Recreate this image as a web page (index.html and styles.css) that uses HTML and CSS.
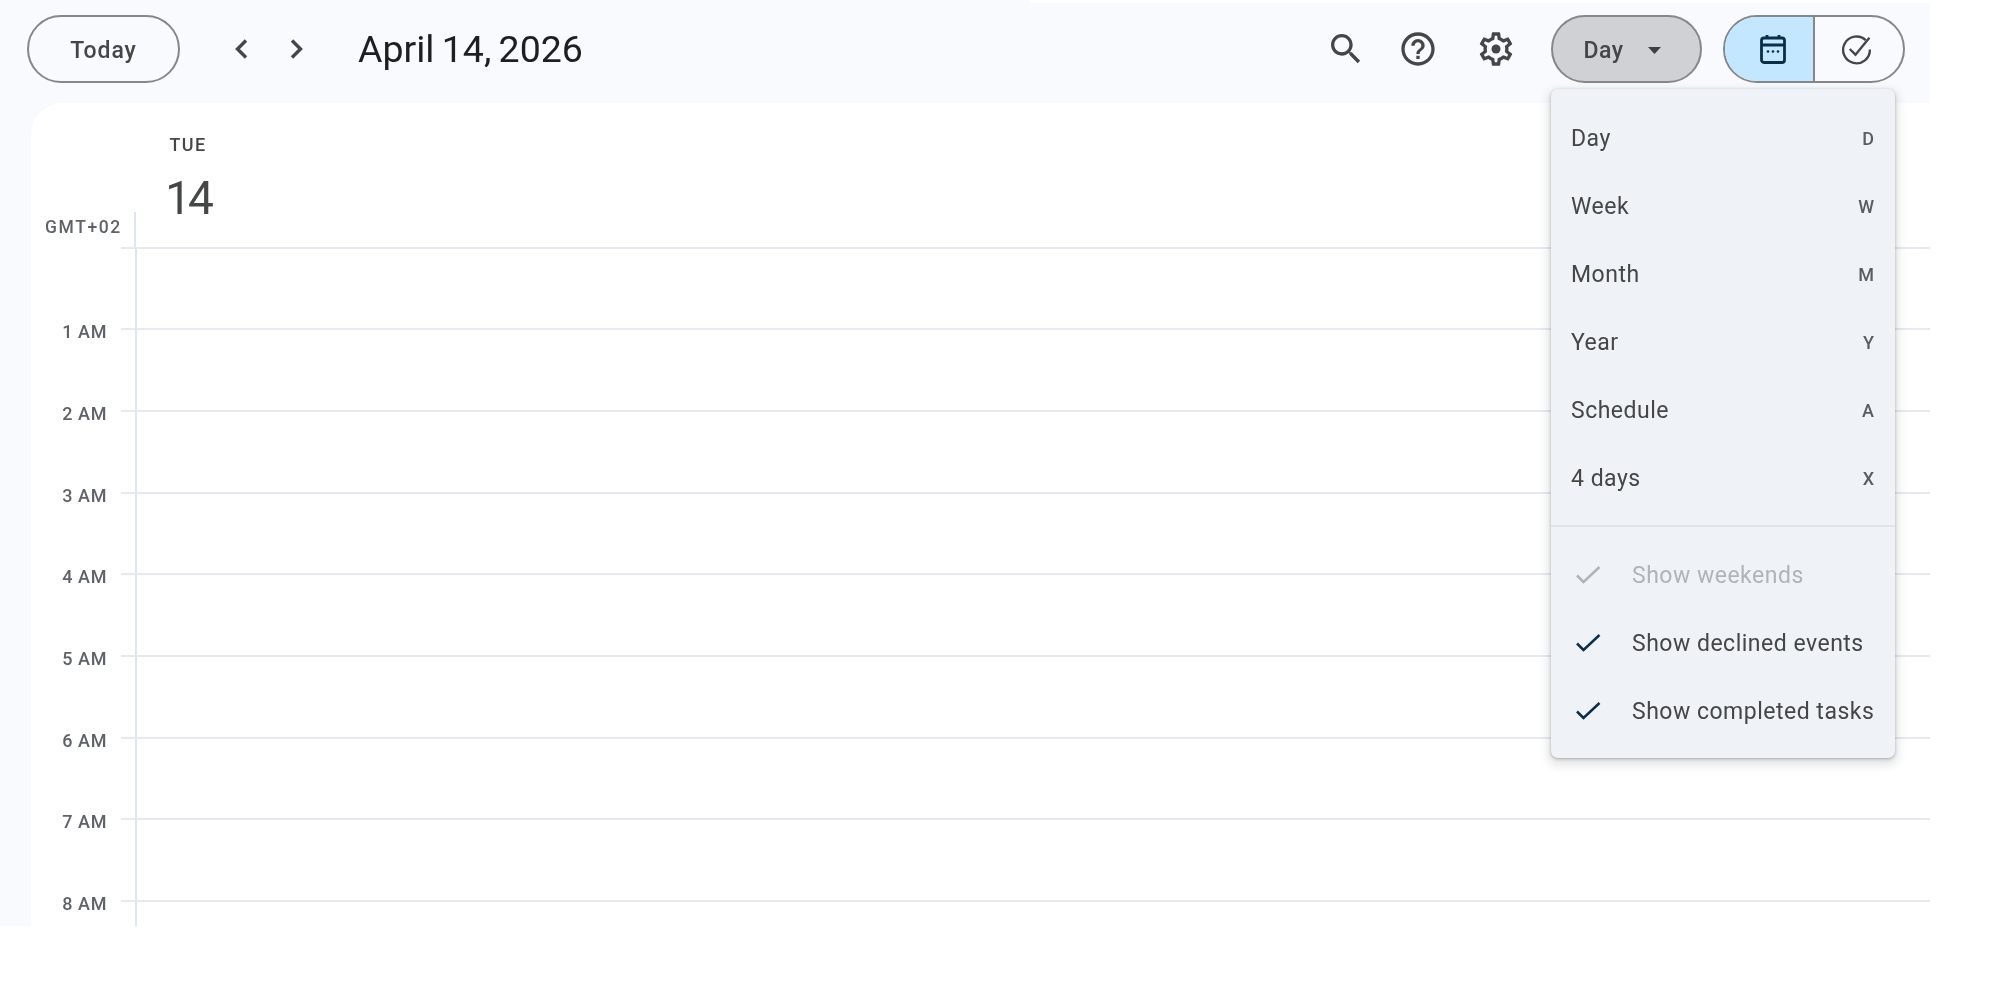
FILE: index.html
```html
<!DOCTYPE html>
<html lang="en">
<head>
<meta charset="utf-8">
<title>Calendar</title>
<link rel="stylesheet" href="styles.css">
</head>
<body>
<div class="app">
  <div class="edge-strip"></div>
  <header class="topbar">
    <button class="pill today">Today</button>
    <button class="icon-btn nav-first" aria-label="Previous"><svg viewBox="0 0 40 40"><path class="chev" d="M26 11.5 17.500 20 26 28.500"/></svg></button>
    <button class="icon-btn nav-next" aria-label="Next"><svg viewBox="0 0 40 40"><path class="chev" d="M14 11.500 22.500 20 14 28.500"/></svg></button>
    <h1 class="date-title">April 14, 2026</h1>
    <button class="icon-btn tool-search" aria-label="Search"><svg viewBox="0 0 24 24"><path d="M15.5 14h-.79l-.28-.27C15.41 12.59 16 11.11 16 9.5 16 5.910 13.090 3 9.500 3S3 5.910 3 9.500 5.910 16 9.500 16c1.610 0 3.090-.59 4.230-1.570l.27.28v.79l5 4.990L20.490 19l-4.990-5zm-6 0C7.010 14 5 11.990 5 9.500S7.010 5 9.500 5 14 7.010 14 9.500 11.990 14 9.500 14z"/></svg></button>
    <button class="icon-btn tool-help" aria-label="Help"><svg viewBox="0 0 24 24"><path d="M11 18h2v-2h-2v2zm1-16C6.480 2 2 6.480 2 12s4.480 10 10 10 10-4.480 10-10S17.520 2 12 2zm0 18c-4.410 0-8-3.590-8-8s3.590-8 8-8 8 3.590 8 8-3.590 8-8 8zm0-14c-2.210 0-4 1.790-4 4h2c0-1.100.9-2 2-2s2 .9 2 2c0 2-3 1.750-3 5h2c0-2.250 3-2.500 3-5 0-2.210-1.790-4-4-4z"/></svg></button>
    <button class="icon-btn tool-gear" aria-label="Settings"><svg viewBox="0 0 24 24"><path d="M19.430 12.980c.04-.32.07-.64.07-.98 0-.34-.03-.66-.07-.98l2.110-1.650c.19-.15.24-.42.12-.64l-2-3.460c-.09-.16-.26-.25-.44-.25-.06 0-.12.01-.17.03l-2.490 1c-.52-.4-1.080-.73-1.690-.98l-.38-2.650C14.460 2.180 14.250 2 14 2h-4c-.25 0-.46.18-.49.42l-.38 2.650c-.61.25-1.170.59-1.690.98l-2.490-1c-.06-.02-.12-.03-.18-.03-.17 0-.34.09-.43.25l-2 3.460c-.13.22-.07.49.12.64l2.110 1.650c-.04.32-.07.65-.07.98 0 .33.03.66.07.98l-2.110 1.650c-.19.15-.24.42-.12.64l2 3.460c.09.16.26.25.44.25.06 0 .12-.01.17-.03l2.490-1c.52.4 1.080.73 1.690.98l.38 2.650c.03.24.24.42.49.42h4c.25 0 .46-.18.49-.42l.38-2.650c.61-.25 1.170-.59 1.690-.98l2.490 1c.06.02.12.03.18.03.17 0 .34-.09.43-.25l2-3.460c.12-.22.07-.49-.12-.64l-2.110-1.650zm-1.980-1.710c.04.31.05.52.05.73 0 .21-.02.43-.05.73l-.14 1.130.89.7 1.080.84-.7 1.210-1.270-.51-1.040-.42-.9.68c-.43.32-.84.56-1.250.73l-1.060.43-.16 1.130-.2 1.350h-1.400l-.19-1.350-.16-1.130-1.060-.43c-.43-.18-.83-.41-1.230-.71l-.91-.7-1.060.43-1.270.51-.7-1.210 1.080-.84.89-.7-.14-1.130c-.03-.31-.05-.54-.05-.74s.02-.43.05-.73l.14-1.130-.89-.7-1.080-.84.7-1.210 1.270.51 1.040.42.9-.68c.43-.32.84-.56 1.250-.73l1.060-.43.16-1.130.2-1.350h1.390l.19 1.350.16 1.130 1.060.43c.43.18.83.41 1.230.71l.91.7 1.060-.43 1.270-.51.7 1.210-1.070.85-.89.7.14 1.130z"/><circle cx="12" cy="12" r="2.700"/></svg></button>
    <div class="view-anchor">
      <button class="pill view-btn"><span>Day</span><svg class="caret" viewBox="0 0 13 7"><path d="M0 0h13L6.500 7z"/></svg></button>
      <div class="menu">
        <div class="menu-item"><span>Day</span><span class="key">D</span></div>
        <div class="menu-item"><span>Week</span><span class="key">W</span></div>
        <div class="menu-item"><span>Month</span><span class="key">M</span></div>
        <div class="menu-item"><span>Year</span><span class="key">Y</span></div>
        <div class="menu-item"><span>Schedule</span><span class="key">A</span></div>
        <div class="menu-item"><span>4 days</span><span class="key">X</span></div>
        <div class="menu-divider"></div>
        <div class="menu-check disabled"><svg viewBox="0 0 26 20"><path d="M2 10.500 8.500 17 24.500 2"/></svg><span>Show weekends</span></div>
        <div class="menu-check"><svg viewBox="0 0 26 20"><path d="M2 10.500 8.500 17 24.500 2"/></svg><span>Show declined events</span></div>
        <div class="menu-check"><svg viewBox="0 0 26 20"><path d="M2 10.500 8.500 17 24.500 2"/></svg><span>Show completed tasks</span></div>
      </div>
    </div>
    <div class="segment">
      <div class="seg seg-active"><svg viewBox="0 0 26 30"><path class="cal-line" d="M7 1v4M19 1v4"/><rect class="cal-line" x="1.500" y="4" width="23" height="24.500" rx="2.500"/><path class="cal-line" d="M1.500 11h23"/><circle cx="8" cy="17.500" r="1.300"/><circle cx="13" cy="17.500" r="1.300"/><circle cx="18" cy="17.500" r="1.300"/></svg></div>
      <div class="seg seg-task"><svg viewBox="0 0 32 32"><path class="task-line" d="M25 7A13 13 0 1 0 29 16"/><path class="task-line" d="M9.500 15.500 15 21 28.500 4.500"/></svg></div>
    </div>
  </header>
  <main class="card">
    <div class="day-head">
      <div class="dow">TUE</div>
      <div class="dom">14</div>
    </div>
    <div class="tz-row"><div class="tz">GMT+02</div><div class="tz-slot"></div></div>
    <div class="hour"><div class="hour-label"></div><div class="tick"></div><div class="slot"></div></div>
    <div class="hour"><div class="hour-label">1 AM</div><div class="tick"></div><div class="slot"></div></div>
    <div class="hour"><div class="hour-label">2 AM</div><div class="tick"></div><div class="slot"></div></div>
    <div class="hour"><div class="hour-label">3 AM</div><div class="tick"></div><div class="slot"></div></div>
    <div class="hour"><div class="hour-label">4 AM</div><div class="tick"></div><div class="slot"></div></div>
    <div class="hour"><div class="hour-label">5 AM</div><div class="tick"></div><div class="slot"></div></div>
    <div class="hour"><div class="hour-label">6 AM</div><div class="tick"></div><div class="slot"></div></div>
    <div class="hour"><div class="hour-label">7 AM</div><div class="tick"></div><div class="slot"></div></div>
    <div class="hour"><div class="hour-label">8 AM</div><div class="tick"></div><div class="slot"></div></div>
  </main>
</div>
</body>
</html>
```
FILE: styles.css
```css
* { box-sizing: border-box; }
html, body { margin: 0; padding: 0; background: #fff; }
body { font-family: Roboto, "Liberation Sans", sans-serif; color: #1f1f1f; overflow: hidden; height: 1000px; }
button { font: inherit; color: inherit; background: none; border: 0; padding: 0; }

.app { position: relative; width: 1930px; height: 926px; background: #f8fafd; display: flex; flex-direction: column; filter: blur(.45px); }
.edge-strip { position: absolute; left: 1029px; right: 0; top: 0; height: 3px; background: #fff; }

.topbar { height: 103px; flex: none; display: flex; align-items: center; padding: 15px 25px 20px 27px; position: relative; z-index: 2; }
.pill { height: 68px; border: 2px solid #85878a; border-radius: 34px; padding-top: 2px; font-size: 23px; font-weight: 500; letter-spacing: .5px; color: #444746; display: flex; align-items: center; justify-content: center; }
.today { width: 153px; letter-spacing: .9px; }
.icon-btn { width: 40px; height: 40px; flex: none; display: flex; }
.icon-btn svg { width: 40px; height: 40px; fill: #444746; }
.chev { fill: none; stroke: #444746; stroke-width: 3.400; }
.nav-first { margin-left: 40px; }
.nav-next { margin-left: 18px; }
.date-title { margin: 0 0 0 40px; font-size: 37.500px; font-weight: 400; word-spacing: -2px; color: #1f1f1f; white-space: nowrap; line-height: 44px; padding-bottom: 1px; }
.tool-search { margin-left: auto; }
.tool-help { margin-left: 32px; }
.tool-gear { margin-left: 38px; }

.view-anchor { position: relative; margin-left: 35px; }
.view-btn { width: 151px; background: #d0d1d4; gap: 24px; padding-right: 9px; }
.caret { width: 13px; height: 7px; fill: #3c4043; }

.segment { margin-left: 21px; width: 182px; height: 68px; border: 2px solid #85878a; border-radius: 34px; display: flex; overflow: hidden; }
.seg { flex: 1; display: flex; align-items: center; justify-content: center; }
.seg-active { flex: none; width: 90px; background: #c2e7ff; border-right: 2px solid #85878a; padding-left: 7px; }
.seg-active svg { width: 26px; height: 30px; fill: #0b2e4a; }
.cal-line { fill: none; stroke: #0b2e4a; stroke-width: 2.800; }
.seg-task { padding-right: 5px; }
.seg-task svg { width: 33px; height: 33px; flex: none; }
.task-line { fill: none; stroke: #444746; stroke-width: 2.300; }

.menu { position: absolute; left: 0; top: 74px; width: 344px; height: 669px; background: #eff2f7; border-radius: 7px; box-shadow: 0 1px 3px rgba(60,64,67,.35), 0 4px 10px 3px rgba(60,64,67,.15); padding: 15px 0 13px; font-size: 23px; letter-spacing: .5px; color: #444746; }
.menu-item { height: 68px; display: flex; align-items: center; justify-content: space-between; padding: 0 21px 0 20px; }
.key { font-size: 18px; font-weight: 500; letter-spacing: 0; color: #5a5d60; }
.menu-divider { height: 2px; margin: 13px 0 14px; background: #e1e4e9; }
.menu-check { height: 68px; display: flex; align-items: center; padding-left: 24px; white-space: nowrap; }
.menu-check svg { width: 26px; height: 20px; flex: none; margin-right: 31px; fill: none; stroke: #0b2e4a; stroke-width: 2.500; }
.menu-check.disabled { color: #b0b3b7; }
.menu-check.disabled svg { stroke: #b0b3b7; }

.card { flex: 1; min-height: 0; margin-left: 31px; background: #fff; border-top-left-radius: 32px; overflow: hidden; display: flex; flex-direction: column; }
.day-head { height: 109px; flex: none; width: 206px; padding-left: 108px; display: flex; flex-direction: column; align-items: center; }
.dow { margin-top: 31px; font-size: 18px; line-height: 22px; font-weight: 500; letter-spacing: 1.300px; color: #444746; }
.dom { margin-top: 15px; font-size: 46px; line-height: 54px; font-weight: 400; letter-spacing: -3px; color: #444746; }
.tz-row { height: 34.700px; flex: none; display: flex; }
.tz { width: 90px; padding-left: 14px; font-size: 17.500px; font-weight: 500; line-height: 30px; color: #5f6368; white-space: nowrap; letter-spacing: 1.600px; }
.tz-slot { margin-left: 13px; border-left: 2px solid #e0e6ef; }
.hour { height: 81.670px; flex: none; display: flex; }
.hour-label { width: 76px; margin-top: -7px; height: 22px; line-height: 22px; text-align: right; font-size: 18px; font-weight: 500; letter-spacing: .6px; color: #5f6368; white-space: nowrap; }
.tick { width: 14px; margin-left: 14px; border-top: 2px solid #e6eaf0; }
.slot { flex: 1; border-top: 2px solid #e6eaf0; border-left: 2px solid #e0e6ef; }
```
